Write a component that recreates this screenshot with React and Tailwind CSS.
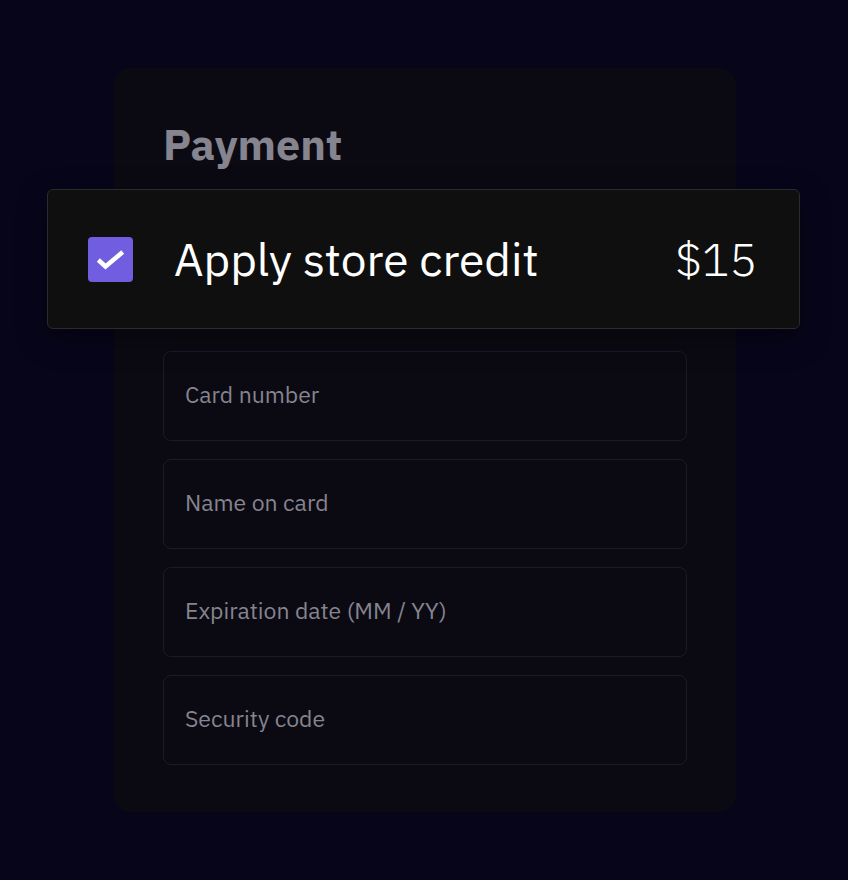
import React from "react";

const inputs = ["Card number", "Name on card", "Expiration date (MM / YY)", "Security code"];

export default function App() {
  return (
    <div
      className="w-[848px] h-[880px] bg-[#07051a] pt-[68px] pl-[114px] overflow-hidden"
      style={{ fontFamily: '"IBM Plex Sans", "Noto Sans", Inter, sans-serif' }}
    >
      <div className="relative w-[622px] h-[744px] bg-[#0b0a13] rounded-[16px] pt-[51px] px-[49px]">
        <h2 className="text-[43px] leading-[50px] font-bold text-[#85848f]">Payment</h2>
        <div className="h-[182px]" />
        <div className="flex flex-col gap-[18px]">
          {inputs.map((t) => (
            <div
              key={t}
              className="h-[90px] rounded-[8px] border border-[#1c1b25] bg-[#0b0a13] flex items-center pl-[21px] pb-[3px] text-[23px] text-[#85848f]"
            >
              {t}
            </div>
          ))}
        </div>

        <div className="absolute left-[-67px] top-[121px] w-[753px] h-[140px] rounded-[6px] border border-[#2b2b2b] bg-[#0f0f0f] flex items-center pl-[40px] pr-[42px] shadow-[0_10px_30px_rgba(0,0,0,0.4)]">
          <div className="w-[45px] h-[45px] shrink-0 rounded-[4px] bg-[#705ddf]">
            <svg width="45" height="45" viewBox="0 0 45 45" fill="none" stroke="white" strokeWidth="4.5" strokeLinecap="square" strokeLinejoin="miter">
              <path d="M12 24.5l5.5 5L33 16.5" />
            </svg>
          </div>
          <span className="ml-[41px] text-[46px] text-white leading-none">Apply store credit</span>
          <span className="ml-auto text-[46px] font-light text-white leading-none">$15</span>
        </div>
      </div>
    </div>
  );
}
